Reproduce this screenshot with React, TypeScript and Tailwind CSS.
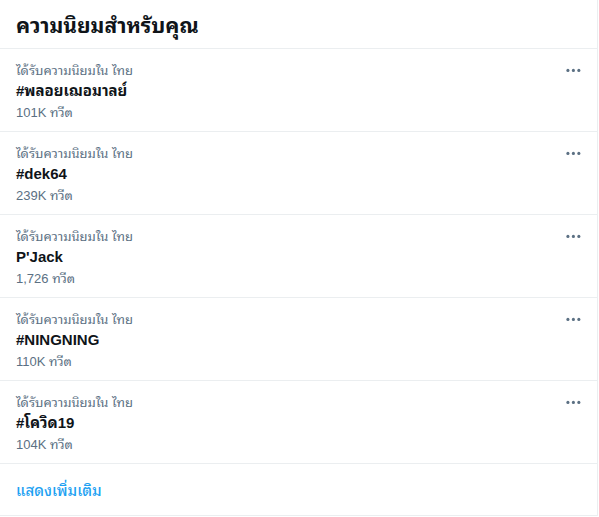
const trends = [
  { title: "#พลอยเฌอมาลย์", count: "101K ทวีต" },
  { title: "#dek64", count: "239K ทวีต" },
  { title: "P'Jack", count: "1,726 ทวีต" },
  { title: "#NINGNING", count: "110K ทวีต" },
  { title: "#โควิด19", count: "104K ทวีต" },
];

function MoreIcon() {
  return (
    <svg viewBox="0 0 24 24" className="h-[18.75px] w-[18.75px] fill-[#5b7083]" aria-hidden="true">
      <circle cx="5" cy="12" r="2" />
      <circle cx="12" cy="12" r="2" />
      <circle cx="19" cy="12" r="2" />
    </svg>
  );
}

export default function App() {
  return (
    <div className="min-h-[517px] bg-white font-['Liberation_Sans','Noto_Sans_Thai_Looped','Noto_Sans',sans-serif]">
      <section className="w-[598px] border-r border-[#ebeef0] bg-white">
        <div className="flex h-[49px] items-center border-b border-[#ebeef0] px-4">
          <h2 className="pt-[3px] text-[21px] font-bold leading-6 text-[#0f1419]">ความนิยมสำหรับคุณ</h2>
        </div>

        {trends.map((trend) => (
          <div key={trend.title} className="flex h-[83px] border-b border-[#ebeef0] px-4 pb-[10px] pt-[14px]">
            <div className="flex flex-1 flex-col">
              <span className="text-[13px] leading-4 text-[#5b7083]">ได้รับความนิยมใน ไทย</span>
              <span className="pt-[2px] text-[15px] font-bold leading-5 text-[#0f1419]">{trend.title}</span>
              <span className="pt-1 text-[13px] leading-4 text-[#5b7083]">{trend.count}</span>
            </div>
            <div className="-mr-[7px] -mt-[2px] flex h-[19px] w-[30px] items-center justify-center">
              <MoreIcon />
            </div>
          </div>
        ))}

        <div className="flex h-[52px] items-center border-b border-[#ebeef0] px-4">
          <span className="pt-[2px] text-[15px] font-medium leading-5 text-[#1da1f2]">แสดงเพิ่มเติม</span>
        </div>
      </section>
    </div>
  );
}
